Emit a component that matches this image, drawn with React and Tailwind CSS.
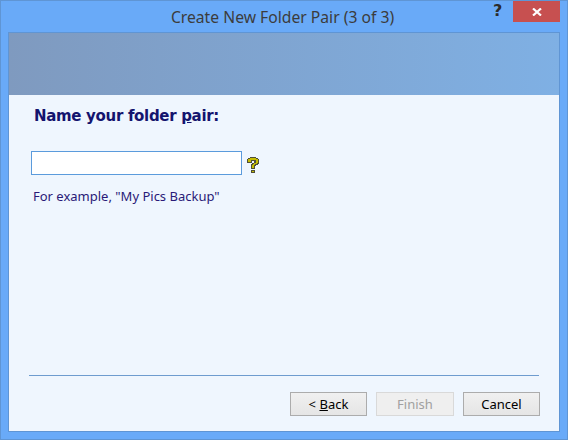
function HelpIcon() {
    return (
        <svg width="13" height="16" viewBox="0 0 12 16" shapeRendering="crispEdges" className="mt-[3px]">
            <path d="M3 0h6v1h2v1h1v5h-1v1H9v1H8v3H4V7h1V6h2V4H5v2H0V2h1V1h2z" fill="#4f4f38" />
            <path d="M3 1h6v1h2v4h-1v1H8v1H7v3H5V8h1V7h1V6h2V3H4v2H1V2h2z" fill="#c4bc00" />
            <path d="M4 13h4v3H4z" fill="#4f4f38" />
            <path d="M5 14h2v1H5z" fill="#c4bc00" />
        </svg>
    );
}

function Button({ children, disabled }) {
    return (
        <button
            disabled={disabled}
            className={
                disabled
                    ? 'w-[78px] h-6 pt-px border border-[#d9d9d9] bg-[#efefef] text-[#a0a0a0] text-[13px]'
                    : 'w-[77px] h-6 pt-px border border-[#acacac] bg-gradient-to-b from-[#f0f0f0] to-[#e5e5e5] text-black text-[13px]'
            }
        >
            {children}
        </button>
    );
}

export default function App() {
    return (
        <div className="w-[568px] h-[440px] flex flex-col bg-[#69aaf8] border border-[#5f95d4] font-['Noto_Sans',sans-serif]">
            {/* title bar */}
            <div className="h-[31px] shrink-0 relative flex items-center justify-center">
                <span className="text-[15.7px] text-[#3c3c3c] pt-[3px] -ml-[3px]">Create New Folder Pair (3 of 3)</span>
                <div className="absolute right-[7px] top-0 flex">
                    <span className="w-[28px] text-base font-bold text-[#2b2b2b] leading-[20px] pl-[8px] font-['DejaVu_Sans',sans-serif]">?</span>
                    <div className="w-[47px] h-[21px] bg-[#c75050] flex items-center justify-center">
                        <svg width="10" height="8" viewBox="0 0 10 8">
                            <path d="M1 0.5 L9 7.5 M9 0.5 L1 7.5" stroke="#fff" strokeWidth="2.2" />
                        </svg>
                    </div>
                </div>
            </div>

            {/* client area */}
            <div className="flex-1 mx-[7px] mb-[7px] flex flex-col border border-[#5f95d4] bg-[#eff6fe]">
                <div className="h-[62px] shrink-0 bg-gradient-to-r from-[#7f9abf] to-[#7fb0e4]" />
                <div className="flex-1 flex flex-col px-5">
                    <h1 className="mt-[11px] ml-[5px] text-[15px] leading-[20px] font-bold text-[#14146e] font-['DejaVu_Sans',sans-serif] tracking-[-0.32px]">
                        Name your folder <span className="underline">p</span>air:
                    </h1>
                    <div className="mt-[25px] ml-[2px] flex items-center gap-[4px]">
                        <input type="text" className="w-[211px] h-6 border border-[#5b9bdc] bg-white outline-none" />
                        <HelpIcon />
                    </div>
                    <p className="mt-[12px] ml-[4px] text-[13px] leading-[18px] text-[#2a1a78]">For example, "My Pics Backup"</p>
                    <div className="flex-1" />
                    <div className="border-t border-[#6e9ccf]" />
                    <div className="mt-4 mb-[15px] flex justify-end gap-[9px] -mr-px">
                        <Button>
                            &lt; <span className="underline">B</span>ack
                        </Button>
                        <Button disabled>Finish</Button>
                        <Button>Cancel</Button>
                    </div>
                </div>
            </div>
        </div>
    );
}
